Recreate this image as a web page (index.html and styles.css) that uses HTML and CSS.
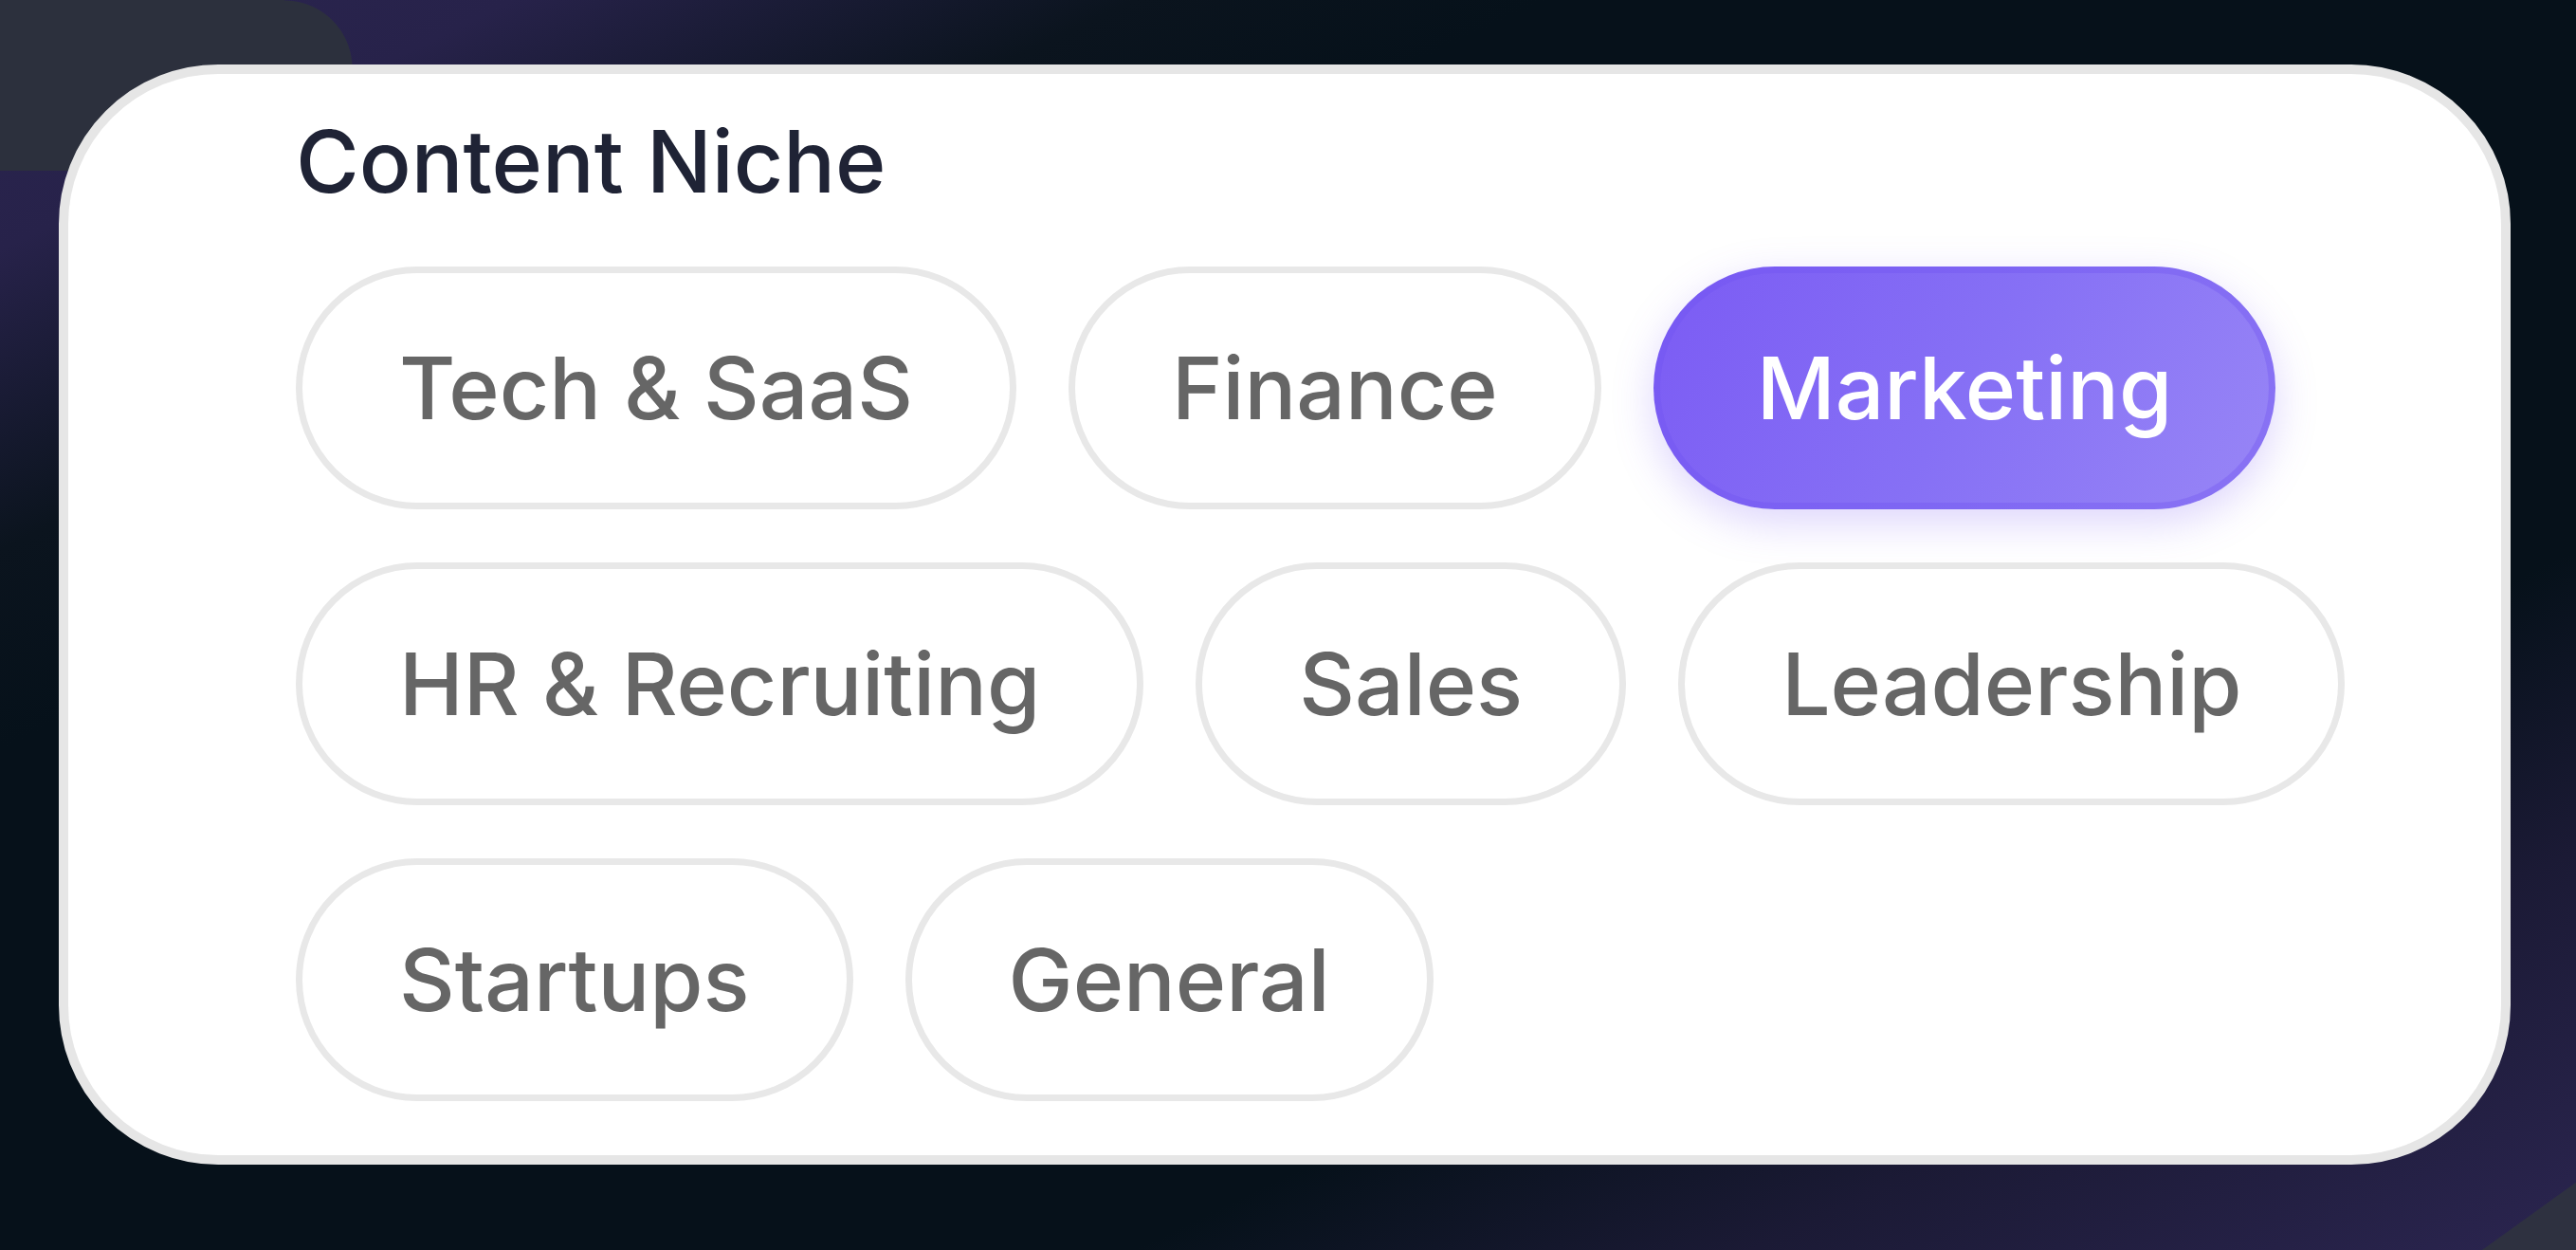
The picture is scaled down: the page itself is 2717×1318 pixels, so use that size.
FILE: index.html
```html
<!DOCTYPE html>
<html lang="en">
<head>
<meta charset="utf-8">
<title>Content Niche</title>
<link rel="stylesheet" href="styles.css">
</head>
<body>
  <section class="card">
    <h2 class="title">Content Niche</h2>
    <div class="chips">
      <button class="chip">Tech &amp; SaaS</button>
      <button class="chip">Finance</button>
      <button class="chip chip--active">Marketing</button>
      <button class="chip">HR &amp; Recruiting</button>
      <button class="chip">Sales</button>
      <button class="chip">Leadership</button>
      <button class="chip">Startups</button>
      <button class="chip">General</button>
    </div>
  </section>
</body>
</html>
```

FILE: styles.css
```css
html, body {
  margin: 0;
  height: 100%;
}

body {
  box-sizing: border-box;
  padding: 68px 0 0 62px;
  font-family: "Inter", "Noto Sans", sans-serif;
  background-color: #05111a;
  background-image:
    linear-gradient(#2c303d, #2c303d),
    linear-gradient(#2c303d, #2c303d),
    radial-gradient(circle 72px at 300px 72px, #2c303d 71px, transparent 72px),
    linear-gradient(to bottom right, transparent 50%, #2e3140 51%),
    linear-gradient(to bottom right, #2b2550 0%, #27224a 10%, #0b141e 22%, #06111a 30%, #06111a 72%, #1b1a35 84%, #2b2550 100%);
  background-repeat: no-repeat;
  background-size: 300px 180px, 372px 108px, 372px 180px, 100px 72px, 100% 100%;
  background-position: 0 0, 0 72px, 0 0, right bottom, 0 0;
  overflow: hidden;
}

.card {
  box-sizing: border-box;
  width: 2586px;
  height: 1160px;
  background: #ffffff;
  border: 10px solid #e6e6e6;
  border-radius: 168px;
  padding: 37px 0 0 240px;
}

.title {
  margin: 0 0 56px;
  font-size: 91px;
  line-height: 110px;
  font-weight: 500;
  color: #1f2335;
  letter-spacing: 0;
}

.chips {
  display: flex;
  flex-wrap: wrap;
  gap: 56px 55px;
  max-width: 2300px;
}

.chip {
  box-sizing: border-box;
  height: 256px;
  padding: 0 102px;
  border: 7px solid #e8e8e8;
  border-radius: 128px;
  background: #ffffff;
  font-family: inherit;
  font-size: 91px;
  font-weight: 500;
  color: #666666;
  line-height: 1;
  display: flex;
  align-items: center;
  justify-content: center;
  cursor: pointer;
}

.chip--active {
  border-color: rgba(112, 84, 240, 0.35);
  background: linear-gradient(120deg, #7b5bf4 0%, #8670f5 50%, #9886f6 100%) border-box;
  color: #ffffff;
  box-shadow: 0 14px 44px rgba(124, 92, 245, 0.26);
}
```
